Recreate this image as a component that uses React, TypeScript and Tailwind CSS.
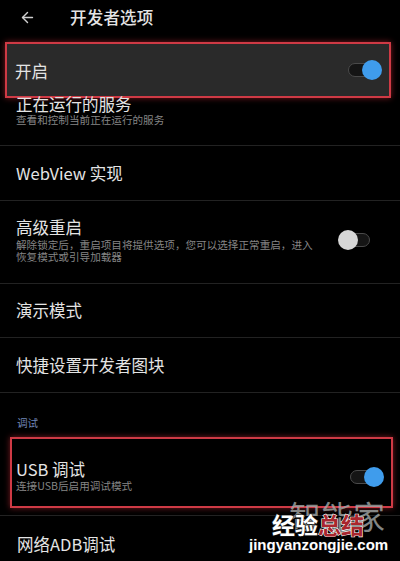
import { ArrowLeft } from 'lucide-react';

function Toggle({ on }: { on: boolean }) {
  return (
    <div className="relative w-[32px] h-[20px] flex items-center">
      <div className="w-[30px] h-[14px] rounded-full border-[1.5px] border-[#4a4a4a] bg-[#151515]" />
      <div
        className={
          on
            ? 'absolute right-[-2px] top-0 w-[20px] h-[20px] rounded-full bg-[#3f9cec]'
            : 'absolute left-[-2px] top-0 w-[20px] h-[20px] rounded-full bg-[#d6d6d6]'
        }
      />
    </div>
  );
}

const Divider = () => <div className="h-px bg-[#222222]" />;

export default function App() {
  return (
    <div className="relative w-[400px] h-[561px] overflow-hidden bg-black text-[#e4e4e4] font-['Noto_Sans_CJK_SC','Noto_Sans',sans-serif]">
      <div className="h-[42px] flex items-center pb-[8px]">
        <ArrowLeft className="ml-[19px] w-[17px] h-[17px] text-[#cfcfcf]" strokeWidth={2} />
        <span className="ml-[34px] text-[16.5px] font-medium tracking-[0.2px]">开发者选项</span>
      </div>

      <div className="ml-[5px] w-[386px] h-[56px] border-2 border-[#cf3a45] shadow-[0_0_6px_rgba(220,50,60,0.55)] bg-[#2a2a2a] flex items-center justify-between pl-[8px] pr-[9px]">
        <span className="text-[16.5px] pt-[2px]">开启</span>
        <Toggle on />
      </div>

      <div className="h-[50px] -mt-[3px] pl-[16px]">
        <div className="text-[16.5px] leading-[18px]">正在运行的服务</div>
        <div className="text-[10.6px] leading-[14px] text-[#858585]">查看和控制当前正在运行的服务</div>
      </div>
      <Divider />

      <div className="h-[54px] flex items-center pl-[16px] text-[16.5px]">WebView 实现</div>
      <Divider />

      <div className="h-[82px] flex items-center justify-between pl-[16px] pr-[28px]">
        <div className="pb-[6px]">
          <div className="text-[16.5px] leading-[22px]">高级重启</div>
          <div className="mt-[1px] text-[10.6px] leading-[12px] text-[#858585]">
            解除锁定后，重启项目将提供选项，您可以选择正常重启，进入
            <br />
            恢复模式或引导加载器
          </div>
        </div>
        <div className="pb-[4px]">
          <Toggle on={false} />
        </div>
      </div>
      <Divider />

      <div className="h-[53px] flex items-center pl-[16px] text-[16.5px]">演示模式</div>
      <Divider />

      <div className="h-[54px] flex items-center pl-[16px] text-[16.5px]">快捷设置开发者图块</div>
      <Divider />

      <div className="h-[44px] flex items-center pl-[17px] pt-[16px] text-[10.6px] text-[#7086b8]">调试</div>

      <div className="ml-[10px] w-[383px] h-[71px] border-2 border-[#cf3a45] shadow-[0_0_6px_rgba(220,50,60,0.55)] flex items-center justify-between pl-[4px] pr-[9px]">
        <div className="pt-[4px]">
          <div className="text-[16.5px] leading-[22px]">USB 调试</div>
          <div className="text-[10.6px] leading-[12px] text-[#858585]">连接USB后启用调试模式</div>
        </div>
        <div className="pt-[8px]">
          <Toggle on />
        </div>
      </div>

      <div className="h-[7px]" />
      <Divider />
      <div className="h-[56px] flex items-center pl-[17px] text-[16.5px]">网络ADB调试</div>

      <div className="absolute left-[246px] top-[496px] w-[154px] h-[65px] pointer-events-none">
        <div className="absolute left-[43px] top-[1px] text-[32px] leading-[36px] text-[#a3a8a8] opacity-80">智能家</div>
        <div className="absolute left-[26px] top-[14px] text-[23px] leading-[28px] font-bold whitespace-nowrap [-webkit-text-stroke:1.2px_#222] [paint-order:stroke_fill]">
          <span className="text-white">经验</span>
          <span className="text-[#a8262e] [-webkit-text-stroke:1.2px_#ffffff]">总结</span>
        </div>
        <div className="absolute left-[3px] top-[40px] text-[15px] leading-[18px] font-bold whitespace-nowrap font-['Liberation_Sans',sans-serif] text-white [-webkit-text-stroke:1px_#111] [paint-order:stroke_fill]">
          jingyanzongjie.com
        </div>
      </div>
    </div>
  );
}
